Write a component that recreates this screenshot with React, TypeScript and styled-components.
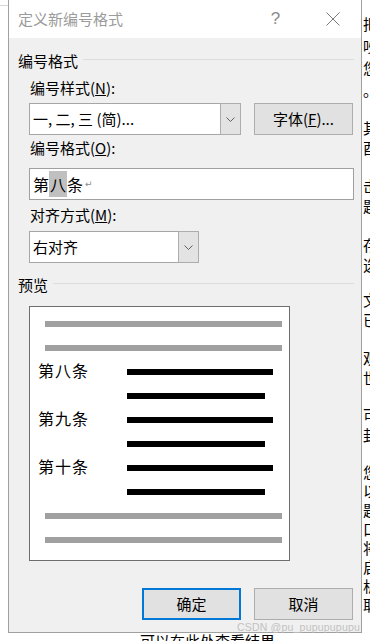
import styled, { createGlobalStyle } from "styled-components";

const GlobalStyle = createGlobalStyle`
  html, body {
    margin: 0;
    padding: 0;
    background: #fff;
  }
  body {
    font-family: "Noto Sans CJK SC", "Noto Sans", sans-serif;
    color: #000;
  }
  * {
    box-sizing: border-box;
  }
`;

const Page = styled.div`
  position: relative;
  width: 370px;
  height: 641px;
  overflow: hidden;
  background: #fff;
`;

const TopRow = styled.div`
  display: flex;
  height: 633px;
`;

const LeftStrip = styled.div`
  width: 8px;
  flex: none;
  padding-top: 5px;

  &::before {
    content: "";
    display: block;
    height: 1px;
    background: #d8d8d8;
  }
`;

const RightStrip = styled.div`
  width: 8px;
  flex: none;
  overflow: hidden;
  display: flex;
  flex-direction: column;
  padding-left: 1px;
`;

const BackLines = styled.div<{ $top: number; $pitch: number }>`
  margin-top: ${(p) => p.$top}px;
  font-size: 15px;
  line-height: ${(p) => p.$pitch}px;
  white-space: nowrap;
`;

const Dialog = styled.div`
  width: 354px;
  flex: none;
  display: flex;
  flex-direction: column;
  background: #f0f0f0;
  border: 1px solid #a0a0a0;
  border-top: none;
`;

const TitleBar = styled.div`
  height: 38px;
  flex: none;
  display: flex;
  align-items: center;
  background: #fff;
  padding-left: 9px;
`;

const Title = styled.div`
  flex: 1;
  font-size: 15px;
  line-height: 20px;
  color: #9b9b9b;
`;

const CaptionButton = styled.div`
  width: 57px;
  height: 38px;
  display: flex;
  align-items: center;
  justify-content: center;
  color: #8a8a8a;
  font-family: "Liberation Sans", sans-serif;
  font-size: 17px;
`;

const Body = styled.div`
  flex: 1;
  display: flex;
  flex-direction: column;
  padding: 13px 7px 12px 9px;
`;

const SectionHeader = styled.div<{ $top?: number }>`
  display: flex;
  align-items: center;
  gap: 5px;
  height: 20px;
  margin-top: ${(p) => p.$top ?? 0}px;
  font-size: 15px;
  line-height: 20px;

  &::after {
    content: "";
    flex: 1;
    height: 1px;
    margin-top: -3px;
    background: #dcdcdc;
  }
`;

const Label = styled.div<{ $top: number }>`
  margin-top: ${(p) => p.$top}px;
  padding-left: 12px;
  font-size: 15px;
  line-height: 20px;
`;

const ControlRow = styled.div<{ $top: number }>`
  display: flex;
  gap: 13px;
  margin-top: ${(p) => p.$top}px;
  margin-left: 11px;
`;

const Select = styled.div<{ $width: number }>`
  width: ${(p) => p.$width}px;
  height: 32px;
  display: flex;
  background: #fff;
  border: 1px solid #a6a6a6;
`;

const SelectValue = styled.div`
  flex: 1;
  padding-left: 3px;
  font-size: 15px;
  line-height: 29px;
  white-space: nowrap;
`;

const DropButton = styled.div`
  width: 21px;
  display: flex;
  align-items: center;
  justify-content: center;
  background: #e3e3e3;
  border: 1px solid #adadad;
  margin: -1px -1px -1px 0;
`;

const PushButton = styled.div<{ $primary?: boolean }>`
  width: 99px;
  height: 32px;
  display: flex;
  align-items: center;
  justify-content: center;
  background: #e1e1e1;
  border: ${(p) => (p.$primary ? "2px solid #0078d7" : "1px solid #adadad")};
  font-size: 15px;
  line-height: 20px;
`;

const TextInput = styled.div`
  flex: 1;
  height: 32px;
  display: flex;
  align-items: center;
  padding-left: 3px;
  background: #fff;
  border: 1px solid #a0a0a0;
  font-size: 16px;
`;

const Marked = styled.span`
  display: inline-block;
  height: 26px;
  line-height: 26px;
  padding: 0 1px;
  background: #c0c0c0;
`;

const ReturnMark = styled.span`
  margin-left: 2px;
  font-family: "DejaVu Sans", sans-serif;
  font-size: 9px;
  color: #8a8a8a;
`;

const Preview = styled.div`
  width: 261px;
  height: 255px;
  margin-top: 11px;
  margin-left: 11px;
  padding: 14px 7px 0 8px;
  display: flex;
  flex-direction: column;
  background: #fff;
  border: 1px solid #6e6e6e;
`;

const BarGroup = styled.div<{ $gap: number }>`
  display: flex;
  flex-direction: column;
  gap: ${(p) => p.$gap}px;
  margin-left: 7px;
`;

const Entries = styled.div`
  display: flex;
  flex-direction: column;
  gap: 9px;
  margin: 9px 0 18px;
`;

const Entry = styled.div`
  display: flex;
  align-items: flex-start;
`;

const EntryLabel = styled.div`
  width: 89px;
  flex: none;
  font-size: 16px;
  line-height: 20px;
  letter-spacing: 1px;
`;

const EntryBars = styled.div`
  display: flex;
  flex-direction: column;
  gap: 18px;
  padding-top: 9px;
`;

const Bar = styled.div<{ $width?: number; $dark?: boolean }>`
  width: ${(p) => (p.$width ? `${p.$width}px` : "auto")};
  height: 6px;
  background: ${(p) => (p.$dark ? "#000" : "#a0a0a0")};
`;

const Footer = styled.div`
  margin-top: auto;
  display: flex;
  justify-content: flex-end;
  gap: 13px;
  padding-right: 1px;
`;

const BottomStrip = styled.div`
  height: 8px;
  overflow: hidden;
  padding-left: 140px;
  font-size: 15px;
  line-height: 15px;
  white-space: nowrap;
`;

const Watermark = styled.div`
  position: absolute;
  right: 10px;
  top: 621px;
  font-family: "Liberation Sans", sans-serif;
  font-size: 10.5px;
  line-height: 12px;
  color: #c2c2c2;
  letter-spacing: 0.2px;
`;

const Chevron = () => (
  <svg width="9" height="5" viewBox="0 0 9 5">
    <polyline points="0.5,0.5 4.5,4.5 8.5,0.5" fill="none" stroke="#606060" strokeWidth="1" />
  </svg>
);

const CloseIcon = () => (
  <svg width="14" height="14" viewBox="0 0 14 14">
    <path d="M0.5 0.5 L13.5 13.5 M13.5 0.5 L0.5 13.5" stroke="#7a7a7a" strokeWidth="1" fill="none" />
  </svg>
);

const backText = [
  { top: 13, pitch: 22, chars: "把吵您。" },
  { top: 17, pitch: 20, chars: "其酉" },
  { top: 18, pitch: 20, chars: "击题" },
  { top: 19, pitch: 20, chars: "存选" },
  { top: 15, pitch: 20, chars: "文已" },
  { top: 18, pitch: 20, chars: "观世" },
  { top: 17, pitch: 20, chars: "可封" },
  { top: 17, pitch: 19, chars: "您以题口将启析取" },
];

const entries = ["第八条", "第九条", "第十条"];

export default function App() {
  return (
    <Page>
      <GlobalStyle />
      <TopRow>
        <LeftStrip />
        <Dialog>
          <TitleBar>
            <Title>定义新编号格式</Title>
            <CaptionButton>?</CaptionButton>
            <CaptionButton>
              <CloseIcon />
            </CaptionButton>
          </TitleBar>
          <Body>
            <SectionHeader>编号格式</SectionHeader>
            <Label $top={7}>
              编号样式(<u>N</u>):
            </Label>
            <ControlRow $top={5}>
              <Select $width={212}>
                <SelectValue>一, 二, 三 (简)...</SelectValue>
                <DropButton>
                  <Chevron />
                </DropButton>
              </Select>
              <PushButton>
                字体(<u>F</u>)...
              </PushButton>
            </ControlRow>
            <Label $top={3}>
              编号格式(<u>O</u>):
            </Label>
            <ControlRow $top={10}>
              <TextInput>
                第<Marked>八</Marked>条<ReturnMark>↵</ReturnMark>
              </TextInput>
            </ControlRow>
            <Label $top={5}>
              对齐方式(<u>M</u>):
            </Label>
            <ControlRow $top={6}>
              <Select $width={170}>
                <SelectValue>右对齐</SelectValue>
                <DropButton>
                  <Chevron />
                </DropButton>
              </Select>
            </ControlRow>
            <SectionHeader $top={12}>预览</SectionHeader>
            <Preview>
              <BarGroup $gap={18}>
                <Bar />
                <Bar />
              </BarGroup>
              <Entries>
                {entries.map((label) => (
                  <Entry key={label}>
                    <EntryLabel>{label}</EntryLabel>
                    <EntryBars>
                      <Bar $dark $width={146} />
                      <Bar $dark $width={138} />
                    </EntryBars>
                  </Entry>
                ))}
              </Entries>
              <BarGroup $gap={18}>
                <Bar />
                <Bar />
              </BarGroup>
            </Preview>
            <Footer>
              <PushButton $primary>确定</PushButton>
              <PushButton>取消</PushButton>
            </Footer>
          </Body>
        </Dialog>
        <RightStrip>
          {backText.map((g, i) => (
            <BackLines key={i} $top={g.top} $pitch={g.pitch}>
              {g.chars.split("").map((c, j) => (
                <div key={j}>{c}</div>
              ))}
            </BackLines>
          ))}
        </RightStrip>
      </TopRow>
      <BottomStrip>可以在此处查看结果</BottomStrip>
      <Watermark>CSDN @pu_pupupupupu</Watermark>
    </Page>
  );
}
